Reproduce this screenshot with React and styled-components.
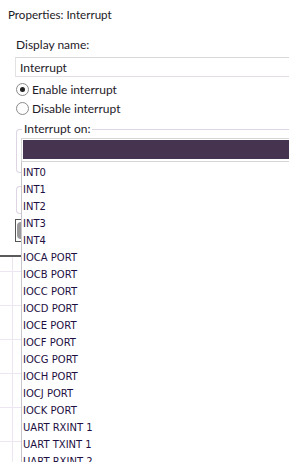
import React from "react";
import styled, { createGlobalStyle } from "styled-components";

const Global = createGlobalStyle`
  html, body { margin: 0; padding: 0; background: #ffffff; }
  body { width: 289px; height: 462px; overflow: hidden; font-family: Lato, "Liberation Sans", sans-serif; }
  * { box-sizing: border-box; }
`;

const Page = styled.div`
  position: relative;
  width: 289px;
  height: 462px;
  overflow: hidden;
  background: #ffffff;
  color: #1e1a2a;
  font-size: 12px;
`;

const Title = styled.div`
  height: 29px;
  padding: 7px 0 0 8px;
  font-size: 11.6px;
  line-height: 15px;
  color: #1c1a26;
`;

const Form = styled.div`
  display: flex;
  flex-direction: column;
  padding-left: 15px;
`;

const Label = styled.div`
  height: 22px;
  padding: 9px 0 0 1px;
  line-height: 14px;
  margin-bottom: 6px;
`;

const TextBox = styled.div`
  height: 20px;
  border-top: 1px solid #d8d8d8;
  border-left: 1px solid #e2e2e2;
  border-bottom: 1px solid #e4dde8;
  padding: 2px 0 0 4px;
  line-height: 15px;
  margin-right: -10px;
`;

const RadioRow = styled.label`
  display: flex;
  align-items: center;
  gap: 3px;
  height: 19px;
  margin-top: ${p => p.$first ? "3px" : "0"};
`;

const RadioCircle = styled.span`
  width: 13px;
  height: 13px;
  border-radius: 50%;
  border: 1px solid #8a8a8a;
  background: #fdfdfd;
  display: flex;
  align-items: center;
  justify-content: center;
  margin-left: 1px;
  &::after {
    content: "";
    width: 5px;
    height: 5px;
    border-radius: 50%;
    background: ${p => p.$on ? "#222" : "transparent"};
  }
`;

const GroupBox = styled.div`
  position: relative;
  margin-top: ${p => p.$top}px;
  margin-left: 1px;
  height: ${p => p.$h}px;
  border: 1px solid #ddd5e3;
  border-right: none;
  border-radius: 4px 0 0 4px;
`;

const Legend = styled.span`
  position: absolute;
  left: 5px;
  top: -8px;
  padding: 0 2px;
  background: #fff;
  line-height: 14px;
`;

const Combo = styled.div`
  margin: 8px 0 0 4px;
  height: 24px;
  border: 1px solid #d6d6d6;
  border-right: none;
  padding: 1px 0 2px 1px;
`;

const ComboFill = styled.div`
  height: 100%;
  background: #463350;
`;

const Button = styled.div`
  margin-top: 5px;
  width: 6px;
  height: 23px;
  border: 1px solid #555;
  border-right: none;
  display: flex;
  align-items: center;
  padding-left: 1px;
  &::after {
    content: "";
    width: 5px;
    height: 17px;
    border-radius: 5px 0 0 5px;
    background: #9a9a9a;
  }
`;

const Separator = styled.div`
  margin: 13px 0 0 -15px;
  width: 22px;
  height: 2px;
  background: #5a5a5a;
`;

const Grid = styled.div`
  margin-left: -15px;
  height: 210px;
  width: 22px;
  background:
    linear-gradient(to right, transparent 12px, #ebe6f2 12px, #ebe6f2 13px, transparent 13px),
    repeating-linear-gradient(to bottom, transparent 0, transparent 14px, #ebe6f2 14px, #ebe6f2 15px, transparent 15px, transparent 34px);
`;

const Dropdown = styled.ul`
  position: absolute;
  left: 21px;
  top: 162px;
  right: 0;
  bottom: 0;
  margin: 0;
  padding: 2px 0 0;
  list-style: none;
  background: #fff;
  border-left: 1px solid #c9c5cc;
`;

const Item = styled.li`
  height: 17px;
  line-height: 17px;
  padding-left: 1px;
  font-family: "DejaVu Sans", "Liberation Sans", sans-serif;
  font-size: 10px;
  color: #1e0f42;
  white-space: nowrap;
`;

const items = [
  "INT0", "INT1", "INT2", "INT3", "INT4",
  "IOCA PORT", "IOCB PORT", "IOCC PORT", "IOCD PORT", "IOCE PORT",
  "IOCF PORT", "IOCG PORT", "IOCH PORT", "IOCJ PORT", "IOCK PORT",
  "UART RXINT 1", "UART TXINT 1", "UART RXINT 2",
];

export default function App() {
  return (
    <Page>
      <Global />
      <Title>Properties: Interrupt</Title>
      <Form>
        <Label>Display name:</Label>
        <TextBox>Interrupt</TextBox>
        <RadioRow $first><RadioCircle $on />Enable interrupt</RadioRow>
        <RadioRow><RadioCircle />Disable interrupt</RadioRow>
        <GroupBox $top={11} $h={44}>
          <Legend>Interrupt on:</Legend>
          <Combo><ComboFill /></Combo>
        </GroupBox>
        <GroupBox $top={13} $h={28} />
        <Button />
        <Separator />
        <Grid />
      </Form>
      <Dropdown>
        {items.map(t => <Item key={t}>{t}</Item>)}
      </Dropdown>
    </Page>
  );
}
